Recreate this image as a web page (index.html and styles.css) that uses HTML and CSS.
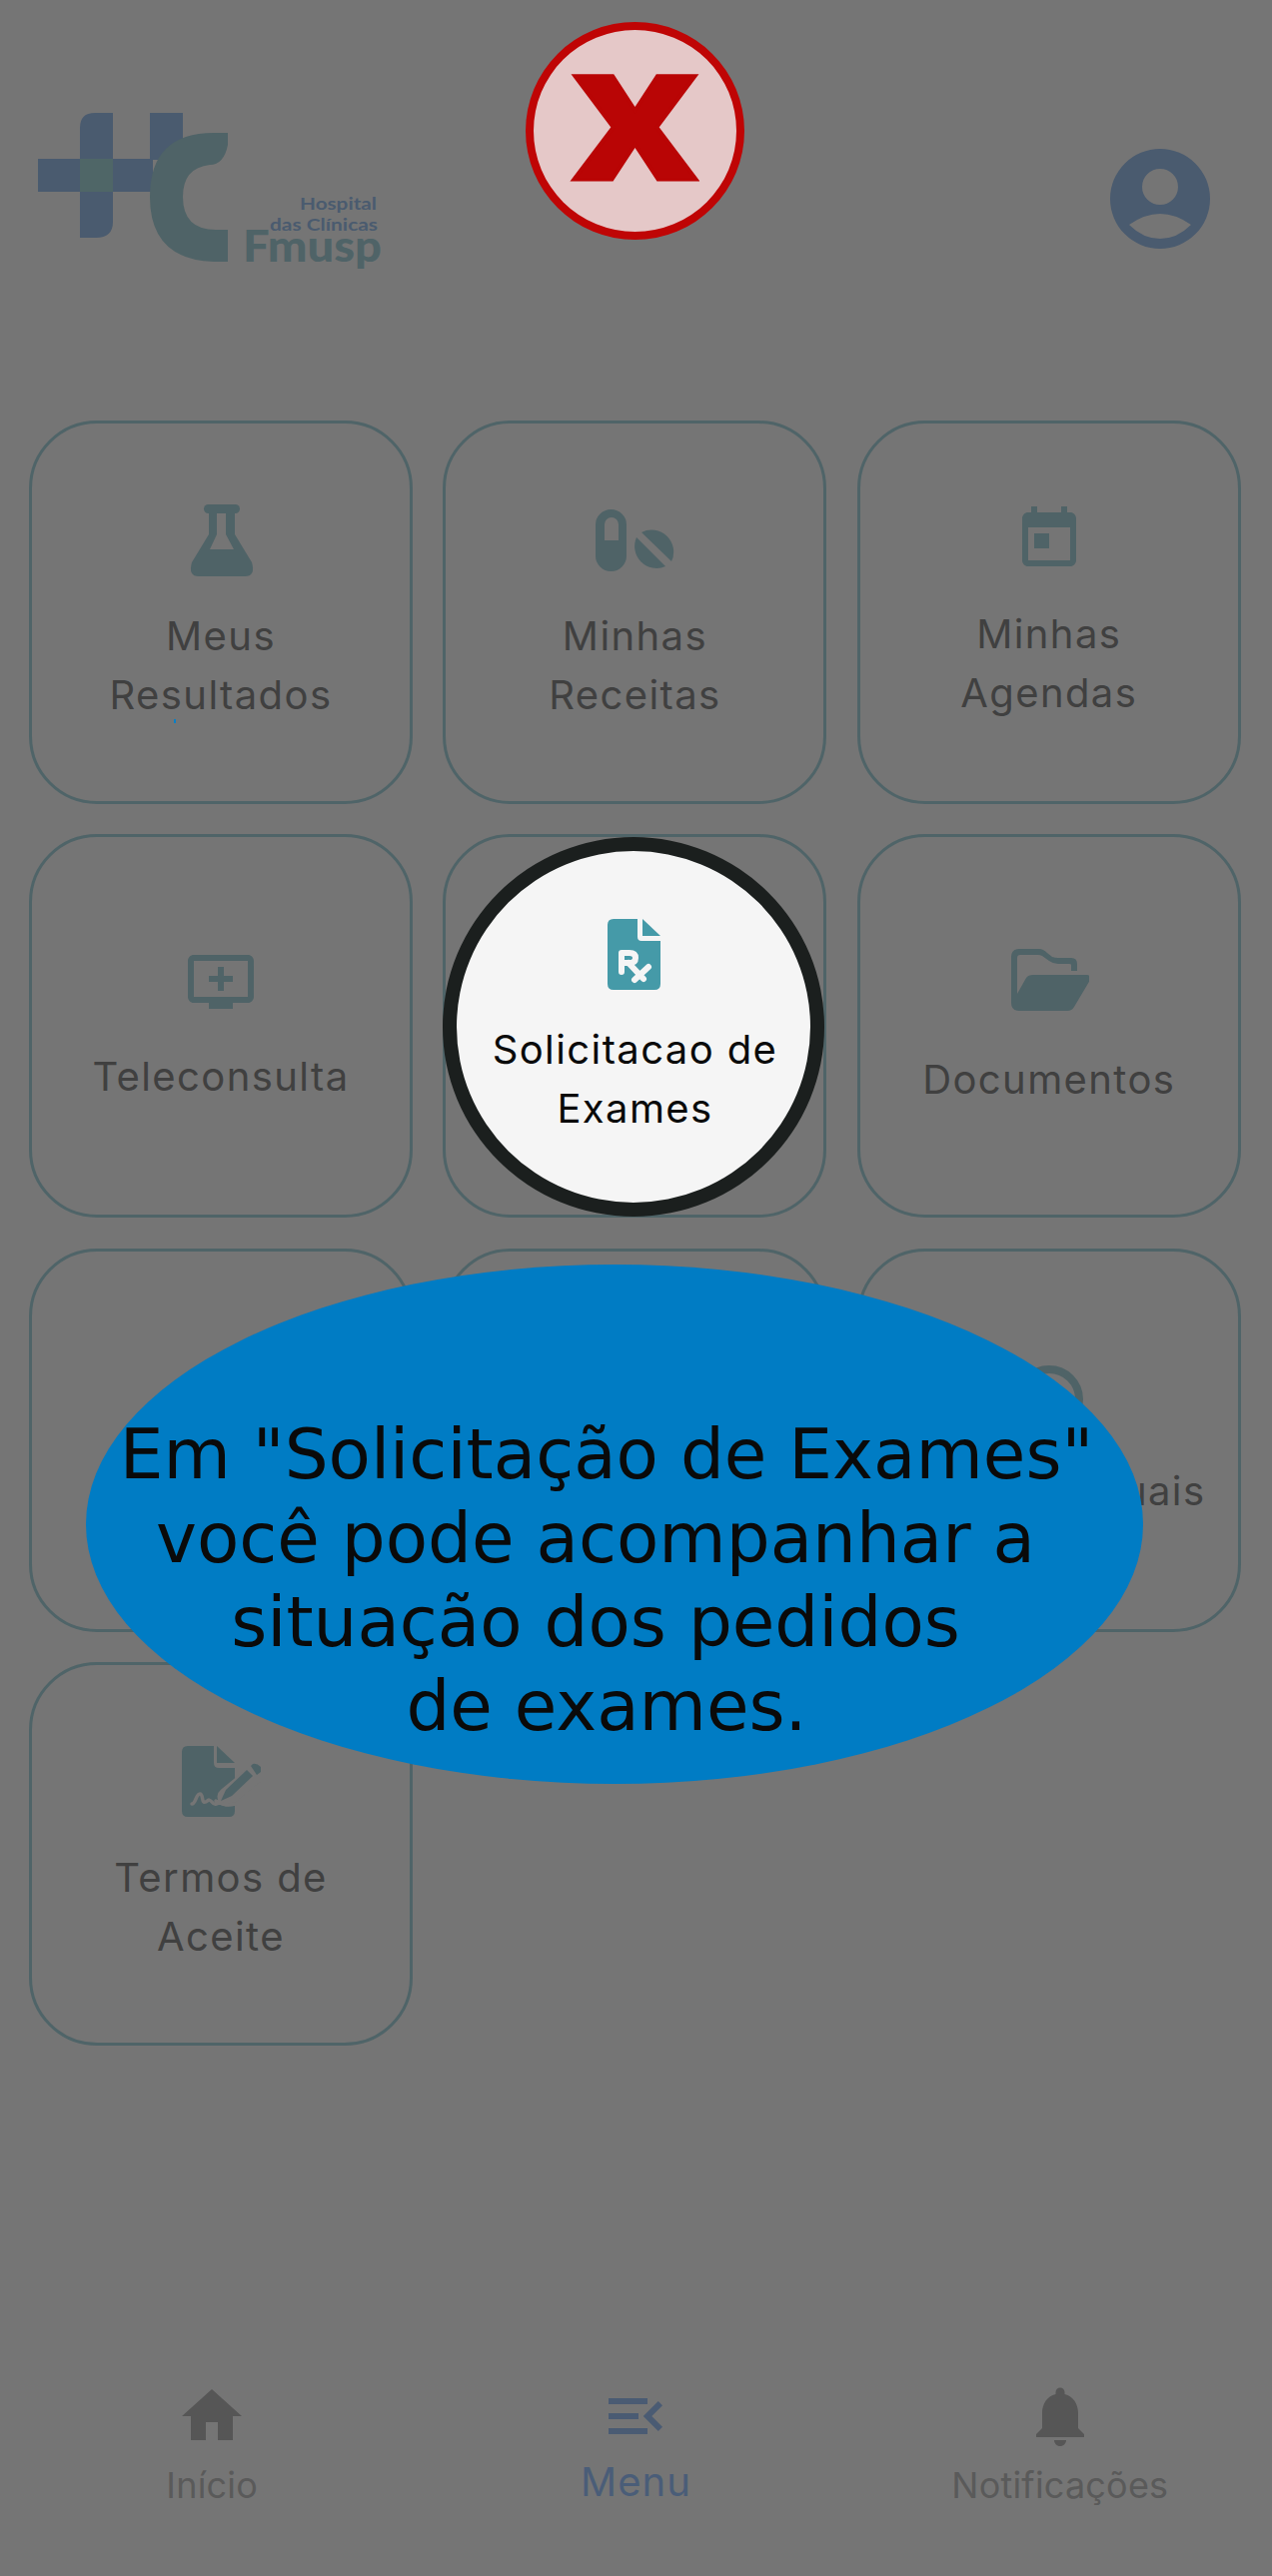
FILE: index.html
```html
<!DOCTYPE html>
<html lang="pt-BR">
<head>
    <meta charset="UTF-8">
    <meta name="viewport" content="width=device-width, initial-scale=1.0">
    <title>Menu</title>
    <link rel="stylesheet" href="styles.css">
</head>
<body>

<div class="page">
    <header class="topo">
        <svg class="logo" viewBox="35 110 350 170" aria-label="Hospital das Clínicas Fmusp">
            <path class="azul" d="M95 113H113V159H150V113H183V160H153V192H113V222Q113 238 96 238H80V192H38V159H80V128Q80 113 95 113Z"/>
            <rect class="verde-claro" x="80" y="159" width="33" height="33"/>
            <path class="verde" d="M228 133V145Q224 165 210 165Q183 168 183 197Q183 230 216 230H228V262H214Q150 260 150 197Q150 133 214 133Z"/>
            <text class="logo-txt azul" x="300" y="210" textLength="77" lengthAdjust="spacingAndGlyphs">Hospital</text>
            <text class="logo-txt azul" x="270" y="231" textLength="108" lengthAdjust="spacingAndGlyphs">das Clínicas</text>
            <text class="logo-grande verde" x="243" y="262" textLength="139" lengthAdjust="spacingAndGlyphs">Fmusp</text>
        </svg>
        <svg class="avatar" viewBox="0 0 102 100">
            <path class="azul" fill-rule="evenodd" d="M51 0A50 50 0 1 1 51 100A50 50 0 1 1 51 0ZM51 20A18 18 0 1 0 51 56A18 18 0 1 0 51 20ZM20 76Q51 54 82 76Q68 90 51 90Q34 90 20 76Z"/>
        </svg>
    </header>

    <main class="grade">
        <a class="card">
            <span class="marca"></span>
            <svg class="icone-fa" viewBox="0 -1 80 77">
                <rect x="23" y="3" width="36" height="9" rx="4.5"/>
                <path fill-rule="evenodd" d="M28 11V33L11 61Q7 75 18 75H64Q75 75 71 61L54 33V11ZM36 12H45V33L53 48H29L36 33Z"/>
            </svg>
            <span class="rotulo">Meus<br>Resultados</span>
        </a>
        <a class="card">
            <svg class="icone-fa" viewBox="0 -1 80 77">
                <path fill-rule="evenodd" d="M16.5 8A15.5 15.5 0 0 1 32 23.5V54.5A15.5 15.5 0 0 1 1 54.5V23.5A15.5 15.5 0 0 1 16.5 8ZM10 39H24V23A7 7 0 0 0 10 23Z"/>
                <path d="M47 31A22 22 0 0 1 77 60Z"/>
                <path d="M42 36L71 65A22 22 0 0 1 42 36Z"/>
            </svg>
            <span class="rotulo">Minhas<br>Receitas</span>
        </a>
        <a class="card">
            <svg class="icone" viewBox="0 0 24 24">
                <path d="M19 3h-1V1h-2v2H8V1H6v2H5c-1.11 0-1.99.9-1.99 2L3 19c0 1.1.89 2 2 2h14c1.1 0 2-.9 2-2V5c0-1.1-.9-2-2-2zm0 16H5V8h14v11zM7 10h5v5H7z"/>
            </svg>
            <span class="rotulo">Minhas<br>Agendas</span>
        </a>

        <a class="card">
            <svg class="icone" viewBox="0 0 24 24">
                <path d="M21 3H3c-1.11 0-2 .89-2 2v12c0 1.1.89 2 2 2h5v2h8v-2h5c1.1 0 1.99-.9 1.99-2L23 5c0-1.11-.9-2-2-2zm0 14H3V5h18v12zm-5-7v2h-3v3h-2v-3H8v-2h3V7h2v3h3z"/>
            </svg>
            <span class="rotulo">Teleconsulta</span>
        </a>
        <a class="card"></a>
        <a class="card">
            <svg class="icone-fa" viewBox="0 -1 80 77">
                <path transform="translate(2 4)" d="M8 0H28Q32 0 36 4L41 8Q44 9 47 9H60Q66 9 66 15V22H60V16Q60 15 58 15H47Q42 15 38 12L31 7Q29 6 27 6H9Q6 6 6 9V45L15 29Q17 26 22 26H76Q81 27 79 31L63 58Q61 62 56 62H8Q0 62 0 54V8Q0 0 8 0Z"/>
            </svg>
            <span class="rotulo">Documentos</span>
        </a>

        <a class="card"></a>
        <a class="card"></a>
        <a class="card">
            <svg class="icone" viewBox="0 0 72 72">
                <circle cx="36" cy="39" r="30" fill="none" stroke="#4f6367" stroke-width="8"/>
            </svg>
            <span class="rotulo">Grupos Virtuais</span>
        </a>

        <a class="card">
            <svg class="icone-fa" viewBox="0 -1 80 77">
                <g transform="translate(1 3)">
                    <path d="M6 0H32V17Q32 22 37 22H53V65Q53 71 47 71H6Q0 71 0 65V6Q0 0 6 0Z"/>
                    <path d="M35 0L53 17H35Z"/>
                    <path class="corte" d="M72 29L45 51" stroke-width="19"/>
                    <path class="corte" stroke-width="3.5" d="M10 58C14 58 14 48 18 48C22 48 19 58 24 56C27 54 27 53 30 56C33 60 36 58 38 55M34 55Q44 61 53 58"/>
                    <path d="M65 24L71 30L50 50L39 55L44 44Z"/>
                    <path d="M69 20L71 18Q75 17 79 21Q81 24 79 26L75 29Z"/>
                </g>
            </svg>
            <span class="rotulo">Termos de<br>Aceite</span>
        </a>
    </main>

    <nav class="rodape">
        <a class="aba">
            <svg class="icone-nav" viewBox="0 0 24 24"><path d="M10 20v-6h4v6h5v-8h3L12 3 2 12h3v8z"/></svg>
            <span>Início</span>
        </a>
        <a class="aba ativa">
            <svg class="icone-nav" viewBox="0 0 24 24"><path d="M3 18h13v-2H3v2zm0-5h10v-2H3v2zm0-7v2h13V6H3zm18 9.59L17.42 12 21 8.41 19.59 7l-5 5 5 5L21 15.59z"/></svg>
            <span>Menu</span>
        </a>
        <a class="aba">
            <svg class="icone-nav" viewBox="0 0 24 24"><path d="M12 22c1.1 0 2-.9 2-2h-4c0 1.1.89 2 2 2zm6-6v-5c0-3.07-1.64-5.64-4.5-6.32V4c0-.83-.67-1.5-1.5-1.5s-1.5.67-1.5 1.5v.68C7.63 5.36 6 7.92 6 11v5l-2 2v1h16v-1l-2-2z"/></svg>
            <span>Notificações</span>
        </a>
    </nav>

    <!-- tutorial por cima do menu -->
    <button class="fechar"><span>X</span></button>

    <div class="destaque">
        <svg class="icone-fa" viewBox="0 0 80 75">
            <g transform="translate(14 3)">
                <path d="M6 0H30V18Q30 22 34 22H53V65Q53 71 47 71H6Q0 71 0 65V6Q0 0 6 0Z"/>
                <path d="M35 0L53 17H35Z"/>
                <path class="rx" d="M14 53V34H22Q28 34 28 39Q28 44 22 44H14M21 44L36 60M41 48L27 61"/>
            </g>
        </svg>
        <span class="rotulo">Solicitacao de<br>Exames</span>
    </div>

    <div class="balao">
<p>Em "Solicitação de Exames"
você pode acompanhar a 
situação dos pedidos 
de exames.</p>
    </div>
</div>

</body>
</html>
```

FILE: styles.css
```css
* {
    box-sizing: border-box;
}

body {
    margin: 0;
    background-color: #757575;
    font-family: Inter, "Liberation Sans", sans-serif;
}

.page {
    position: relative;
    width: 1273px;
    height: 2579px;
    overflow: hidden;
    display: flex;
    flex-direction: column;
}

/* topo */
.topo {
    height: 421px;
    padding: 110px 61px 0 35px;
    display: flex;
    justify-content: space-between;
    align-items: flex-start;
}

.logo {
    width: 350px;
    height: 170px;
}

.avatar {
    width: 102px;
    height: 100px;
    margin-top: 39px;
}

.azul {
    fill: #4a5b6f;
}

.verde {
    fill: #4f6367;
}

.verde-claro {
    fill: #4f6667;
}

.logo-txt {
    font-family: Lato, sans-serif;
    font-weight: 700;
    font-size: 17px;
}

.logo-grande {
    font-family: Lato, sans-serif;
    font-weight: 900;
    font-size: 44px;
}

/* grade de cards */
.grade {
    padding-left: 29px;
    display: grid;
    grid-template-columns: repeat(3, 384px);
    grid-auto-rows: 384px;
    gap: 30.4px;
}

.card {
    position: relative;
    border: 3px solid #4f6468;
    border-radius: 68px;
    display: flex;
    flex-direction: column;
    align-items: center;
    justify-content: center;
    gap: 29px;
}

.marca {
    position: absolute;
    left: 142px;
    top: 296px;
    width: 2px;
    height: 4px;
    background-color: #0a7fc5;
}

.icone {
    width: 72px;
    height: 72px;
    fill: #4f6367;
}

.icone-fa {
    width: 80px;
    height: 77px;
    fill: #4f6367;
}

.corte {
    fill: none;
    stroke: #757575;
    stroke-linecap: round;
}

.rotulo {
    font-size: 40px;
    line-height: 59px;
    letter-spacing: 1.4px;
    text-align: center;
    color: #404040;
}

/* barra de baixo */
.rodape {
    margin-top: auto;
    height: 196px;
    display: grid;
    grid-template-columns: repeat(3, 1fr);
}

.aba {
    display: flex;
    flex-direction: column;
    align-items: center;
    font-size: 36px;
    letter-spacing: 0.2px;
    color: #5a5a5a;
}

.aba span {
    margin-top: 11px;
    line-height: 44px;
}

.icone-nav {
    width: 72px;
    height: 72px;
    fill: #565656;
}

.ativa {
    font-size: 40px;
    letter-spacing: 1px;
    color: #4a5d78;
}

.ativa span {
    margin-top: 8px;
}

.ativa .icone-nav {
    fill: #4a5b73;
}

/* sobreposicao */
.fechar {
    position: absolute;
    left: 526px;
    top: 22px;
    width: 219px;
    height: 218px;
    padding: 0;
    border: 8px solid #bf0505;
    border-radius: 50%;
    background-color: #e5c8c8;
    display: flex;
    align-items: center;
    justify-content: center;
    font-family: Roboto, sans-serif;
    font-weight: 900;
    font-size: 146px;
    line-height: 1;
    color: #b90505;
}

.fechar span {
    display: block;
    transform: scaleX(1.33);
    -webkit-text-stroke: 3px #b90505;
}

.destaque {
    position: absolute;
    left: 443px;
    top: 838px;
    width: 382px;
    height: 380px;
    border: 14px solid #1b1f1e;
    border-radius: 50%;
    background-color: #f5f5f5;
    display: flex;
    flex-direction: column;
    align-items: center;
    justify-content: center;
    gap: 29px;
}

.destaque .icone-fa {
    height: 75px;
    fill: #459aa8;
}

.destaque .rotulo {
    margin-left: 3px;
    color: #0a0a0a;
}

.rx {
    fill: none;
    stroke: #f5f5f5;
    stroke-width: 6;
    stroke-linecap: round;
    stroke-linejoin: round;
}

.balao {
    position: absolute;
    left: 86px;
    top: 1266px;
    width: 1058px;
    height: 520px;
    border-radius: 50%;
    background-color: #007cc4;
    display: flex;
    align-items: center;
    justify-content: center;
}

.balao p {
    margin: 112px 16px 0 0;
    white-space: pre;
    text-align: center;
    font-family: "DejaVu Sans", sans-serif;
    font-size: 69.2px;
    line-height: 84px;
    color: #0a0a0a;
}
```
